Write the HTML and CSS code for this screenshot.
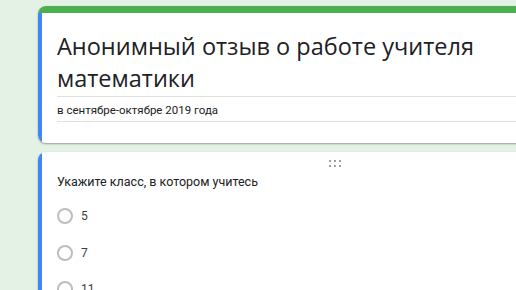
FILE: index.html
```html
<!DOCTYPE html>
<html>

<head>
    <meta charset="utf-8">
    <title>Анонимный отзыв о работе учителя математики</title>
    <link rel="stylesheet" href="styles.css">
</head>

<body>
    <div class="form">
        <div class="card head-card">
            <div class="top-bar"></div>
            <div class="card-body">
                <h1 class="form-title">Анонимный отзыв о работе учителя<br>математики</h1>
                <div class="form-desc">в сентябре-октябре 2019 года</div>
            </div>
        </div>

        <div class="card question-card">
            <div class="card-body">
                <div class="drag-handle">
                    <svg width="12" height="7" viewBox="0 0 12 7">
                        <rect x="0" y="0" width="2" height="2" />
                        <rect x="5" y="0" width="2" height="2" />
                        <rect x="10" y="0" width="2" height="2" />
                        <rect x="0" y="5" width="2" height="2" />
                        <rect x="5" y="5" width="2" height="2" />
                        <rect x="10" y="5" width="2" height="2" />
                    </svg>
                </div>
                <div class="question">Укажите класс, в котором учитесь</div>
                <ul class="options">
                    <li><span class="radio"></span>5</li>
                    <li><span class="radio"></span>7</li>
                    <li><span class="radio"></span>11</li>
                </ul>
            </div>
        </div>
    </div>
</body>

</html>
```

FILE: styles.css
```css
body {
    margin: 0;
    background-color: #e4f2e5;
    overflow: hidden;
    height: 290px;
}

.form {
    padding: 6px 0 0 38px;
    width: 594px;
}

.card {
    background-color: #ffffff;
    border-radius: 8px;
    overflow: hidden;
    box-shadow: 0 1px 2px rgba(0, 0, 0, 0.35);
    margin-bottom: 9px;
}

.top-bar {
    height: 7px;
    background-color: #4caf50;
}

.card-body {
    border-left: 4px solid #4285f4;
    padding-left: 15px;
}

.head-card .card-body {
    padding-top: 17px;
    padding-bottom: 21px;
}

.form-title {
    margin: 0;
    font-family: "Open Sans", sans-serif;
    font-weight: normal;
    font-size: 23.5px;
    line-height: 32px;
    color: #202124;
    padding-bottom: 2px;
    border-bottom: 1px solid #e0e0e0;
}

.form-desc {
    font-family: Roboto, sans-serif;
    font-size: 11.5px;
    line-height: 21px;
    padding-top: 3px;
    color: #202124;
    border-bottom: 1px solid #e0e0e0;
}

.question-card .card-body {
    padding-top: 8px;
    height: 200px;
}

.drag-handle {
    display: flex;
    justify-content: center;
    margin-left: -19px;
    height: 7px;
}

.drag-handle svg {
    fill: #9aa0a6;
}

.question {
    margin-top: 6px;
    font-family: Roboto, sans-serif;
    font-size: 12.5px;
    line-height: 18px;
    color: #202124;
}

.options {
    list-style: none;
    margin: 7px 0 0 0;
    padding: 0;
}

.options li {
    display: flex;
    align-items: center;
    height: 36.5px;
    font-family: Roboto, sans-serif;
    font-size: 12px;
    color: #3c4043;
}

.radio {
    width: 12px;
    height: 12px;
    border: 2px solid #bdbdbd;
    border-radius: 50%;
    margin-right: 8px;
}
```
